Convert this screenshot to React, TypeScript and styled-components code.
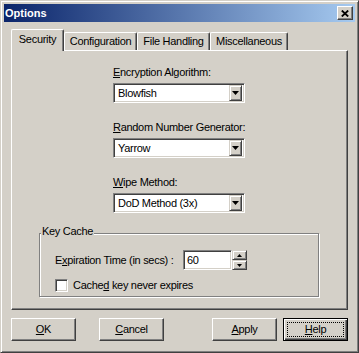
import React from 'react';
import styled, { createGlobalStyle } from 'styled-components';

const FACE = '#d4d0c8';
const LIGHT = '#ffffff';
const SHADOW = '#808080';
const DARK = '#404040';

const GlobalStyle = createGlobalStyle`
  html, body { margin: 0; padding: 0; background: ${FACE}; }
  body { font-family: "Liberation Sans", Arial, sans-serif; font-size: 11px; }
  * { box-sizing: border-box; }
`;

const Window = styled.div`
  width: 359px;
  height: 353px;
  background: ${FACE};
  border: 1px solid;
  border-color: ${FACE} ${DARK} ${DARK} ${FACE};
  box-shadow: inset 1px 1px 0 ${LIGHT}, inset -1px -1px 0 ${SHADOW};
  padding: 3px;
  display: flex;
  flex-direction: column;
  font-family: "Liberation Sans", Arial, sans-serif;
  font-size: 11px;
  line-height: 13px;
  letter-spacing: -0.3px;
  color: #000;
`;

const TitleBar = styled.div`
  height: 18px;
  flex: none;
  background: linear-gradient(to right, #0a246a, #a6caf0);
  display: flex;
  align-items: center;
  justify-content: space-between;
  padding: 0 2px 0 1px;
`;

const Title = styled.span`
  color: #fff;
  font-weight: bold;
  letter-spacing: 0;
`;

const CloseButton = styled.div`
  width: 16px;
  height: 14px;
  background: ${FACE};
  border: 1px solid;
  border-color: ${LIGHT} ${DARK} ${DARK} ${LIGHT};
  box-shadow: inset -1px -1px 0 ${SHADOW};
  display: flex;
  align-items: center;
  justify-content: center;
  padding-right: 1px;
`;

const Body = styled.div`
  flex: 1;
  display: flex;
  flex-direction: column;
  padding: 7px 7px 0;
`;

const TabStrip = styled.div`
  display: flex;
  align-items: flex-end;
  height: 22px;
  margin-bottom: -1px;
  position: relative;
  z-index: 1;
`;

const Tab = styled.div<{ $active?: boolean; $w: number }>`
  width: ${(p) => p.$w}px;
  height: ${(p) => (p.$active ? 22 : 18)}px;
  margin-bottom: ${(p) => (p.$active ? 0 : 1)}px;
  background: ${FACE};
  border-top: 1px solid ${LIGHT};
  border-left: 1px solid ${LIGHT};
  border-right: 1px solid ${DARK};
  box-shadow: inset -1px 0 0 ${SHADOW};
  border-radius: 2px 2px 0 0;
  display: flex;
  justify-content: center;
  padding-top: ${(p) => (p.$active ? 3 : 2)}px;
  white-space: nowrap;
`;

const Panel = styled.div`
  height: 260px;
  flex: none;
  border: 1px solid;
  border-color: ${LIGHT} ${DARK} ${DARK} ${LIGHT};
  box-shadow: inset -1px -1px 0 ${SHADOW};
  display: flex;
  flex-direction: column;
  align-items: flex-start;
  padding: 15px 0 0 27px;
`;

const Fields = styled.div`
  display: flex;
  flex-direction: column;
  gap: 18px;
  margin-left: 74px;
`;

const Field = styled.div`
  display: flex;
  flex-direction: column;
  gap: 4px;
`;

const FieldLabel = styled.span`
  height: 13px;
  white-space: nowrap;
`;

const Sunken = styled.div`
  background: #fff;
  border: 1px solid;
  border-color: ${SHADOW} ${LIGHT} ${LIGHT} ${SHADOW};
  box-shadow: inset 1px 1px 0 ${DARK}, inset -1px -1px 0 ${FACE};
`;

const ComboBox = styled(Sunken)`
  width: 132px;
  height: 20px;
  padding: 2px;
  display: flex;
  align-items: center;
`;

const ComboText = styled.span`
  flex: 1;
  padding-left: 2px;
  white-space: nowrap;
`;

const Raised = styled.div`
  background: ${FACE};
  border: 1px solid;
  border-color: ${FACE} ${DARK} ${DARK} ${FACE};
  box-shadow: inset 1px 1px 0 ${LIGHT}, inset -1px -1px 0 ${SHADOW};
  display: flex;
  align-items: center;
  justify-content: center;
`;

const DropButton = styled(Raised)`
  width: 13px;
  height: 16px;
`;

const Group = styled.fieldset`
  width: 280px;
  margin: 12px 0 0;
  padding: 8px 0 4px 15px;
  border: 1px solid ${SHADOW};
  box-shadow: inset 1px 1px 0 ${LIGHT}, 1px 1px 0 ${LIGHT};
  display: flex;
  flex-direction: column;
  gap: 9px;
  min-width: 0;
`;

const Legend = styled.legend`
  padding: 4px 1px 0;
  margin-left: -14px;
  line-height: 13px;
  background: ${FACE};
  position: relative;
  top: -4px;
`;

const Row = styled.div`
  display: flex;
  align-items: center;
  height: 20px;
`;

const RowLabel = styled.span<{ $w: number }>`
  width: ${(p) => p.$w}px;
  white-space: nowrap;
`;

const EditBox = styled(Sunken)`
  width: 49px;
  height: 20px;
  padding: 2px 3px;
  display: flex;
  align-items: center;
`;

const Spin = styled.div`
  display: flex;
  flex-direction: column;
  width: 15px;
  height: 20px;
`;

const SpinButton = styled(Raised)`
  width: 15px;
  height: 10px;
`;

const CheckRow = styled.label`
  display: flex;
  align-items: center;
  gap: 5px;
  height: 13px;
`;

const CheckBox = styled(Sunken)`
  width: 13px;
  height: 13px;
  flex: none;
`;

const ButtonRow = styled.div`
  display: flex;
  margin-top: 8px;
  height: 23px;
`;

const Spacer = styled.div`
  flex: 1;
`;

const Button = styled.div<{ $default?: boolean; $gap?: number }>`
  width: 65px;
  height: 23px;
  margin-left: ${(p) => p.$gap ?? 0}px;
  background: ${FACE};
  border: 1px solid;
  border-color: ${(p) => (p.$default ? '#000' : `${LIGHT} ${DARK} ${DARK} ${LIGHT}`)};
  box-shadow: ${(p) =>
    p.$default
      ? `inset 1px 1px 0 ${LIGHT}, inset -1px -1px 0 ${DARK}, inset -2px -2px 0 ${SHADOW}`
      : `inset -1px -1px 0 ${SHADOW}`};
  outline: ${(p) => (p.$default ? '1px dotted #000' : 'none')};
  outline-offset: -5px;
  display: flex;
  align-items: center;
  justify-content: center;
  white-space: nowrap;
`;

const DownArrow = ({ w, h }: { w: number; h: number }) => (
  <svg width={w} height={h} viewBox={`0 0 ${w} ${h}`}>
    <polygon points={`0,0 ${w},0 ${w / 2},${h}`} fill="#000" />
  </svg>
);

const UpArrow = ({ w, h }: { w: number; h: number }) => (
  <svg width={w} height={h} viewBox={`0 0 ${w} ${h}`}>
    <polygon points={`0,${h} ${w},${h} ${w / 2},0`} fill="#000" />
  </svg>
);

const Combo = ({ value }: { value: string }) => (
  <ComboBox>
    <ComboText>{value}</ComboText>
    <DropButton>
      <DownArrow w={7} h={4} />
    </DropButton>
  </ComboBox>
);

export default function App() {
  return (
    <>
      <GlobalStyle />
      <Window>
        <TitleBar>
          <Title>Options</Title>
          <CloseButton aria-label="Close">
            <svg width="8" height="7" viewBox="0 0 8 7">
              <path d="M0.8 0.5 L7.2 6.5 M7.2 0.5 L0.8 6.5" stroke="#000" strokeWidth="1.8" />
            </svg>
          </CloseButton>
        </TitleBar>
        <Body>
          <TabStrip>
            <Tab $active $w={53}>Security</Tab>
            <Tab $w={73}>Configuration</Tab>
            <Tab $w={73}>File Handling</Tab>
            <Tab $w={78}>Miscellaneous</Tab>
          </TabStrip>
          <Panel>
            <Fields>
              <Field>
                <FieldLabel>
                  <u>E</u>ncryption Algorithm:
                </FieldLabel>
                <Combo value="Blowfish" />
              </Field>
              <Field>
                <FieldLabel>
                  <u>R</u>andom Number Generator:
                </FieldLabel>
                <Combo value="Yarrow" />
              </Field>
              <Field>
                <FieldLabel>
                  <u>W</u>ipe Method:
                </FieldLabel>
                <Combo value="DoD Method (3x)" />
              </Field>
            </Fields>
            <Group>
              <Legend>Key Cache</Legend>
              <Row>
                <RowLabel $w={128}>
                  E<u>x</u>piration Time (in secs) :
                </RowLabel>
                <EditBox>60</EditBox>
                <Spin>
                  <SpinButton>
                    <UpArrow w={5} h={3} />
                  </SpinButton>
                  <SpinButton>
                    <DownArrow w={5} h={3} />
                  </SpinButton>
                </Spin>
              </Row>
              <CheckRow>
                <CheckBox />
                <span>
                  Cache<u>d</u> key never expires
                </span>
              </CheckRow>
            </Group>
          </Panel>
          <ButtonRow>
            <Button>
              <span>
                <u>O</u>K
              </span>
            </Button>
            <Button $gap={23}>
              <span>
                <u>C</u>ancel
              </span>
            </Button>
            <Spacer />
            <Button>
              <span>
                <u>A</u>pply
              </span>
            </Button>
            <Button $default $gap={6}>
              <span>
                <u>H</u>elp
              </span>
            </Button>
          </ButtonRow>
        </Body>
      </Window>
    </>
  );
}
